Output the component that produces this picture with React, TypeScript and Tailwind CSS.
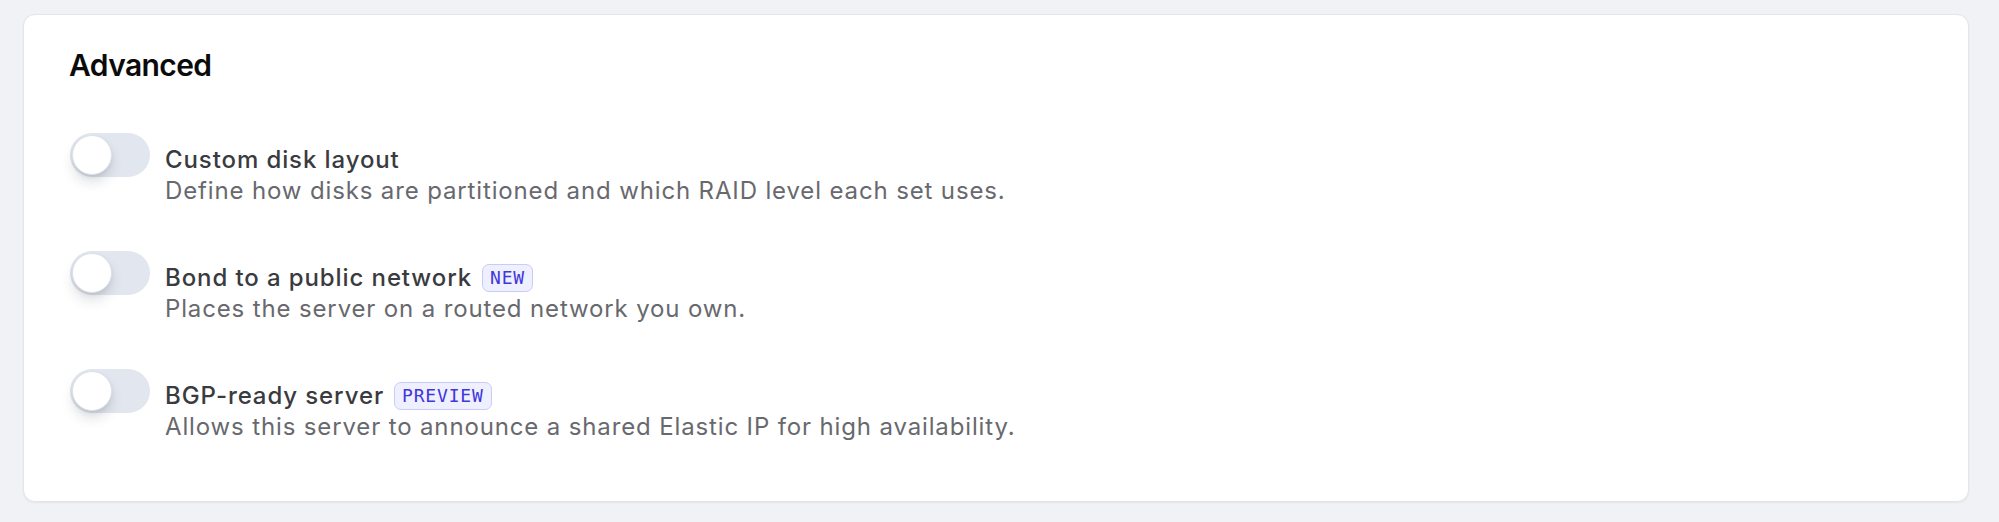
import React, { useState } from "react";

type Option = {
  id: string;
  title: string;
  description: string;
  badge?: string;
};

const options: Option[] = [
  {
    id: "disk",
    title: "Custom disk layout",
    description: "Define how disks are partitioned and which RAID level each set uses.",
  },
  {
    id: "bond",
    title: "Bond to a public network",
    description: "Places the server on a routed network you own.",
    badge: "NEW",
  },
  {
    id: "bgp",
    title: "BGP-ready server",
    description: "Allows this server to announce a shared Elastic IP for high availability.",
    badge: "PREVIEW",
  },
];

function Toggle({ on, onChange }: { on: boolean; onChange: () => void }) {
  return (
    <button
      type="button"
      role="switch"
      aria-checked={on}
      onClick={onChange}
      className={
        "relative flex h-[44px] w-[80px] shrink-0 items-center rounded-full p-[2px] " +
        (on ? "bg-[#4f46e5]" : "bg-[#e2e6ee]")
      }
    >
      <span
        className={
          "block h-[40px] w-[40px] rounded-full border border-[#dde1ea] bg-white shadow-[0_8px_14px_-2px_rgba(15,23,42,0.16),0_2px_4px_rgba(15,23,42,0.06)] transition-transform " +
          (on ? "translate-x-[36px]" : "translate-x-0")
        }
      />
    </button>
  );
}

function Badge({ label }: { label: string }) {
  return (
    <span className="inline-flex h-[28px] items-center rounded-[7px] border border-[#c9cbf8] bg-[#eef0ff] px-[7px] font-['DejaVu_Sans_Mono',monospace] text-[18px] leading-none tracking-[0.8px] text-[#3f36dc]">
      {label}
    </span>
  );
}

export default function App() {
  const [state, setState] = useState<Record<string, boolean>>({});

  return (
    <div className="min-h-screen bg-[#f1f2f6] pb-[19px] pl-[23px] pr-[30px] pt-[14px] font-['Inter',sans-serif]">
      <section className="rounded-[12px] border border-[#e4e5ea] bg-white px-[46px] pb-[59px] pt-[32px] shadow-[0_1px_2px_rgba(0,0,0,0.06)]">
        <h2 className="-ml-[1px] text-[30px] font-semibold leading-[36px] tracking-[-0.6px] text-[#0b0b0c]">Advanced</h2>
        <div className="mt-[50px] flex flex-col gap-[45px]">
          {options.map((o) => (
            <div key={o.id} className="flex items-start gap-[15px]">
              <Toggle
                on={!!state[o.id]}
                onChange={() => setState((s) => ({ ...s, [o.id]: !s[o.id] }))}
              />
              <div className="flex flex-col pt-[11px]">
                <div className="flex items-center gap-[10px]">
                  <span className="text-[24px] font-medium leading-[31px] tracking-[0.9px] text-[#3a3b40]">{o.title}</span>
                  {o.badge && <Badge label={o.badge} />}
                </div>
                <p className="text-[24px] leading-[31px] tracking-[0.86px] text-[#68696e]">{o.description}</p>
              </div>
            </div>
          ))}
        </div>
      </section>
    </div>
  );
}
